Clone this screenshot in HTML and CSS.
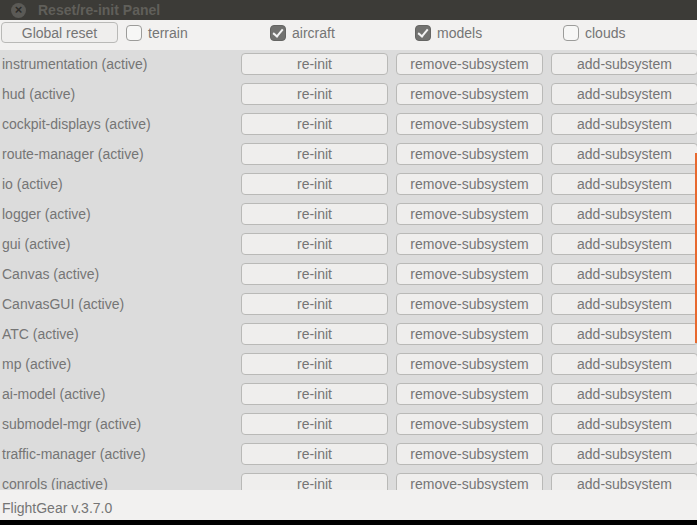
FILE: index.html
```html
<!DOCTYPE html>
<html lang="en">
  <head>
    <meta charset="UTF-8" />
    <title>Reset/re-init Panel</title>
    <link rel="stylesheet" href="styles.css">
  </head>
  <body>
    <div class="window">
      <div class="titlebar">
        <span class="close">&times;</span>
        <span class="title">Reset/re-init Panel</span>
      </div>

      <div class="toolbar">
        <div><button class="btn global">Global reset</button></div>
        <label class="check"><span class="box"></span>terrain</label>
        <label class="check"><span class="box on"></span>aircraft</label>
        <label class="check"><span class="box on"></span>models</label>
        <label class="check"><span class="box"></span>clouds</label>
      </div>

      <div class="list">
        <div id="rows"></div>
        <div class="scroll"></div>
      </div>

      <div class="status">FlightGear v.3.7.0</div>
    </div>
    <div class="bottom"></div>

    <script>
      const subsystems = [
        'instrumentation (active)',
        'hud (active)',
        'cockpit-displays (active)',
        'route-manager (active)',
        'io (active)',
        'logger (active)',
        'gui (active)',
        'Canvas (active)',
        'CanvasGUI (active)',
        'ATC (active)',
        'mp (active)',
        'ai-model (active)',
        'submodel-mgr (active)',
        'traffic-manager (active)',
        'conrols (inactive)'
      ];

      const rows = document.getElementById('rows');
      subsystems.forEach(name => {
        const row = document.createElement('div');
        row.className = 'row';
        row.innerHTML =
          '<span class="name">' + name + '</span>' +
          '<button class="btn">re-init</button>' +
          '<button class="btn">remove-subsystem</button>' +
          '<button class="btn">add-subsystem</button>';
        rows.appendChild(row);
      });
    </script>
  </body>
</html>
```

FILE: styles.css
```css
* {
  margin: 0;
  padding: 0;
  box-sizing: border-box;
}

body {
  width: 697px;
  height: 525px;
  overflow: hidden;
  background-color: #000;
  font-family: "Liberation Sans", Arial, sans-serif;
  font-size: 14px;
  color: #757575;
}

.window {
  height: 520px;
  display: flex;
  flex-direction: column;
  background-color: #f2f1f0;
}

.titlebar {
  height: 20px;
  display: flex;
  align-items: center;
  background-color: #3c3b37;
  padding-left: 11px;
  gap: 12px;
}

.close {
  width: 15px;
  height: 15px;
  border-radius: 50%;
  background-color: #5b5a56;
  color: #2c2b28;
  font-size: 13px;
  line-height: 14px;
  text-align: center;
  font-weight: bold;
}

.title {
  color: #605f5a;
  font-weight: bold;
  font-size: 14px;
}

/* global reset + four toggles, each starting at a fixed column */
.toolbar {
  height: 30px;
  display: grid;
  grid-template-columns: 125px 144px 145px 148px 1fr;
  align-items: start;
  padding: 2px 0 0 1px;
}

.btn {
  height: 22px;
  border: 1px solid #b9b9b7;
  border-radius: 4px;
  background-color: #efeeed;
  font-family: inherit;
  font-size: 14px;
  color: #757575;
}

.global {
  width: 117px;
  height: 21px;
}

.check {
  display: flex;
  align-items: center;
  gap: 6px;
  height: 21px;
}

.box {
  width: 16px;
  height: 16px;
  border: 1px solid #9c9c9a;
  border-radius: 4px;
  background-color: #f7f7f6;
}

.box.on {
  background-color: #727270;
  border-color: #656563;
  position: relative;
}

.box.on::after {
  content: "";
  position: absolute;
  left: 4px;
  top: 1px;
  width: 4px;
  height: 8px;
  border: solid #f4f4f4;
  border-width: 0 2px 2px 0;
  transform: rotate(40deg);
}

.list {
  height: 440px;
  overflow: hidden;
  background-color: #dcdcdc;
  position: relative;
}

.row {
  height: 30px;
  display: grid;
  grid-template-columns: 233px 147px 147px 147px;
  column-gap: 8px;
  align-items: start;
  padding-top: 3px;
}

.name {
  padding-left: 2px;
  line-height: 22px;
}

.scroll {
  position: absolute;
  right: 0;
  top: 103px;
  width: 2px;
  height: 190px;
  background-color: #e8692f;
}

.status {
  height: 30px;
  padding: 10px 0 0 2px;
}

.bottom {
  height: 5px;
  background-color: #000;
}
```
